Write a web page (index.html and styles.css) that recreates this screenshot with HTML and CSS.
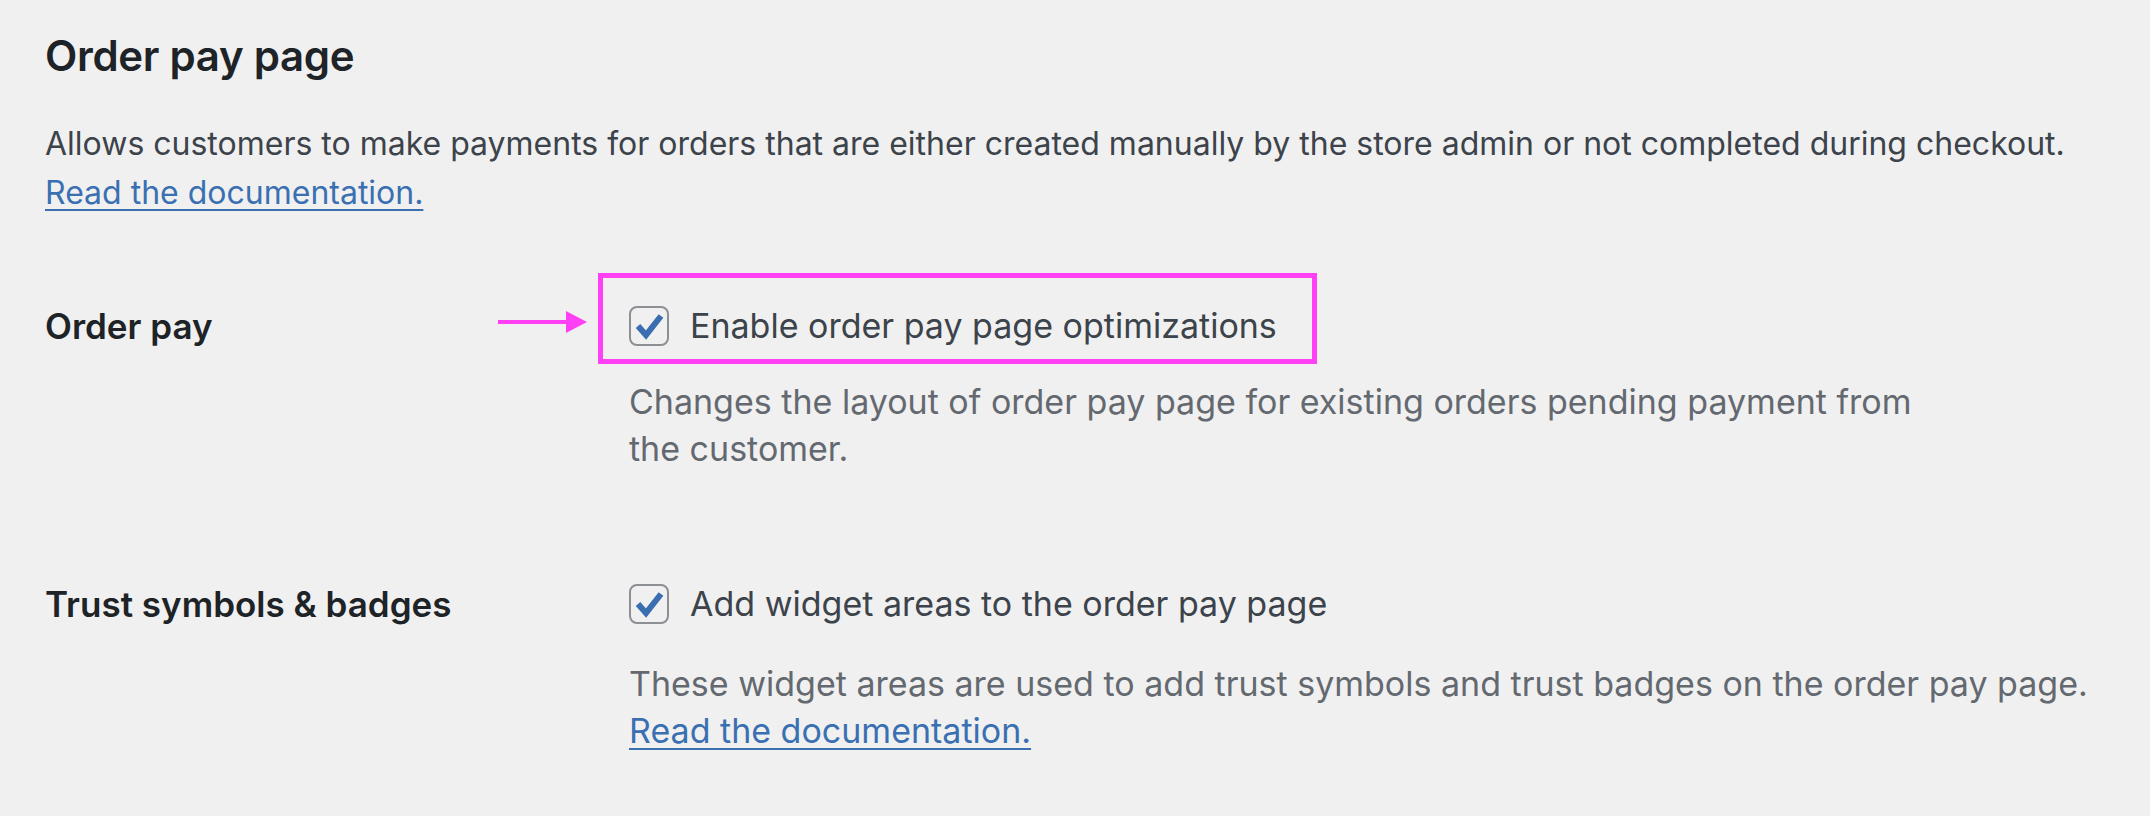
FILE: index.html
```html
<!DOCTYPE html>
<html lang="en">
<head>
<meta charset="utf-8">
<title>Order pay page</title>
<link rel="stylesheet" href="styles.css">
</head>
<body>
<div class="page">
  <h2 class="title">Order pay page</h2>
  <p class="intro">Allows customers to make payments for orders that are either created manually by the store admin or not completed during checkout.<br><a href="#" class="doc-link">Read the documentation.</a></p>

  <div class="form-table">
    <div class="row row-first">
      <div class="th">Order pay</div>
      <div class="td">
        <label class="check-label highlighted">
          <svg class="arrow" width="90" height="22" viewBox="0 0 90 22"><rect x="0" y="9" width="70" height="4" fill="#ff40f4"/><polygon points="68,0 89,11 68,22" fill="#ff40f4"/></svg>
          <span class="highlight"></span>
          <span class="checkbox"><svg viewBox="0 0 40 40" width="40" height="40"><path d="M9 20 L17 29 L32 10" fill="none" stroke="#3a6eb0" stroke-width="6" stroke-linejoin="miter" stroke-linecap="butt"/></svg></span>
          <span class="check-text">Enable order pay page optimizations</span>
        </label>
        <p class="description">Changes the layout of order pay page for existing orders pending payment from<br>the customer.</p>
      </div>
    </div>
    <div class="row row-second">
      <div class="th">Trust symbols &amp; badges</div>
      <div class="td">
        <label class="check-label">
          <span class="checkbox"><svg viewBox="0 0 40 40" width="40" height="40"><path d="M9 20 L17 29 L32 10" fill="none" stroke="#3a6eb0" stroke-width="6" stroke-linejoin="miter" stroke-linecap="butt"/></svg></span>
          <span class="check-text">Add widget areas to the order pay page</span>
        </label>
        <p class="description description-last">These widget areas are used to add trust symbols and trust badges on the order pay page.<br><a href="#" class="doc-link">Read the documentation.</a></p>
      </div>
    </div>
  </div>
</div>
</body>
</html>
```
FILE: styles.css
```css
html, body {
  margin: 0;
  padding: 0;
  background: #f0f0f1;
}
body {
  font-family: Inter, "Noto Sans", "Liberation Sans", sans-serif;
  color: #3c434a;
}
.page {
  padding: 28px 0 0 45px;
}
.title {
  margin: 0;
  font-size: 42px;
  line-height: 56px;
  font-weight: 600;
  color: #1d2327;
  letter-spacing: -0.3px;
}
.intro {
  margin: 35px 0 0;
  font-size: 32px;
  line-height: 49px;
  color: #3c434a;
}
.doc-link {
  color: #3a70b2;
  text-decoration: underline;
  text-decoration-thickness: 2px;
  text-underline-offset: 5px;
}
.form-table {
  display: grid;
  grid-template-columns: 584px 1fr;
}
.row {
  display: contents;
}
.th {
  font-size: 35px;
  font-weight: 600;
  color: #1d2327;
  line-height: 40px;
}
.row-first .th, .row-first .td { margin-top: 89px; }
.row-second .th, .row-second .td { margin-top: 112px; }
.check-label {
  display: inline-flex;
  align-items: center;
  gap: 21px;
  position: relative;
  font-size: 34px;
  line-height: 40px;
  color: #3c434a;
}
.checkbox {
  width: 40px;
  height: 40px;
  box-sizing: border-box;
  border: 2.5px solid #8c8f94;
  border-radius: 8px;
  display: flex;
  align-items: center;
  justify-content: center;
  flex: none;
}
.checkbox svg {
  display: block;
  flex: none;
}
.highlight {
  position: absolute;
  left: -31px;
  top: -33px;
  width: 719px;
  height: 91px;
  box-sizing: border-box;
  border: 5px solid #ff40f4;
}
.arrow {
  position: absolute;
  left: -131px;
  top: 5px;
}
.description {
  margin: 28px 0 0;
  font-size: 34px;
  line-height: 47px;
  color: #646970;
}
.description-last {
  margin-top: 32px;
}
```
